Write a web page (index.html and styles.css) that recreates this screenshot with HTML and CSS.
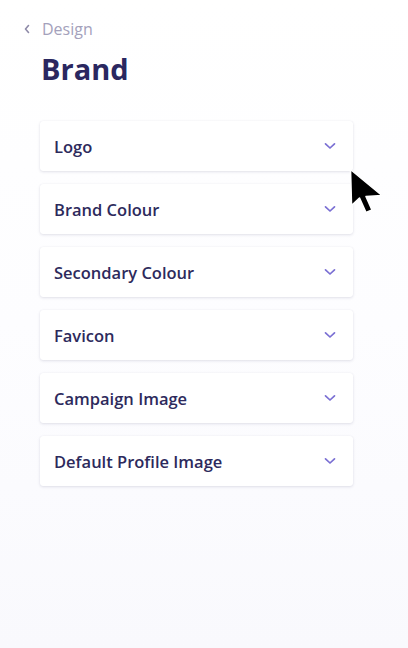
FILE: index.html
```html
<!DOCTYPE html>
<html>
<head>
<meta charset="utf-8">
<link rel="stylesheet" href="styles.css">
</head>
<body>
<div class="page">
  <a class="back">
    <svg class="back-icon" width="8" height="10" viewBox="0 0 8 10"><path d="M5.5 1.5 L2.5 5 L5.5 8.5" fill="none" stroke="#8e8aa8" stroke-width="1.6" stroke-linecap="round" stroke-linejoin="round"/></svg>
    <span>Design</span>
  </a>
  <h1 class="title">Brand</h1>
  <div class="list">
    <div class="card"><span>Logo</span><svg class="chev" width="12" height="8" viewBox="0 0 12 8"><path d="M1.5 1.8 L6 6 L10.5 1.8" fill="none" stroke="#7a6fd3" stroke-width="1.7" stroke-linecap="round" stroke-linejoin="round"/></svg></div>
    <div class="card"><span>Brand Colour</span><svg class="chev" width="12" height="8" viewBox="0 0 12 8"><path d="M1.5 1.8 L6 6 L10.5 1.8" fill="none" stroke="#7a6fd3" stroke-width="1.7" stroke-linecap="round" stroke-linejoin="round"/></svg></div>
    <div class="card"><span>Secondary Colour</span><svg class="chev" width="12" height="8" viewBox="0 0 12 8"><path d="M1.5 1.8 L6 6 L10.5 1.8" fill="none" stroke="#7a6fd3" stroke-width="1.7" stroke-linecap="round" stroke-linejoin="round"/></svg></div>
    <div class="card"><span>Favicon</span><svg class="chev" width="12" height="8" viewBox="0 0 12 8"><path d="M1.5 1.8 L6 6 L10.5 1.8" fill="none" stroke="#7a6fd3" stroke-width="1.7" stroke-linecap="round" stroke-linejoin="round"/></svg></div>
    <div class="card"><span>Campaign Image</span><svg class="chev" width="12" height="8" viewBox="0 0 12 8"><path d="M1.5 1.8 L6 6 L10.5 1.8" fill="none" stroke="#7a6fd3" stroke-width="1.7" stroke-linecap="round" stroke-linejoin="round"/></svg></div>
    <div class="card"><span>Default Profile Image</span><svg class="chev" width="12" height="8" viewBox="0 0 12 8"><path d="M1.5 1.8 L6 6 L10.5 1.8" fill="none" stroke="#7a6fd3" stroke-width="1.7" stroke-linecap="round" stroke-linejoin="round"/></svg></div>
  </div>
  <svg class="cursor" width="36" height="48" viewBox="0 0 36 48"><path d="M1.5 1.5 L2.5 37.5 L10.5 30 L17 44.5 L23 42 L17 28.5 L33 27.5 Z" fill="#000" stroke="#fff" stroke-width="1.6" stroke-linejoin="round"/></svg>
</div>
</body>
</html>
```
FILE: styles.css
```css
html, body {
  margin: 0;
  padding: 0;
}
body {
  background: linear-gradient(180deg, #ffffff 0%, #fdfdff 50%, #f9f9fd 100%);
  font-family: "Open Sans", Lato, sans-serif;
  width: 408px;
  height: 648px;
  overflow: hidden;
}
.page {
  position: relative;
  padding: 19px 55px 0 40px;
}
.back {
  display: flex;
  align-items: center;
  gap: 11px;
  margin-left: -17px;
  color: #a4a1bb;
  font-size: 16px;
  height: 20px;
}
.back-icon {
  display: block;
}
.title {
  margin: 12px 0 0 1px;
  font-size: 29px;
  font-weight: 700;
  color: #2a2760;
  line-height: 36px;
}
.list {
  display: flex;
  flex-direction: column;
  gap: 13px;
  margin-top: 34px;
  width: 313px;
}
.card {
  height: 50px;
  background: #fff;
  border-radius: 3px;
  box-shadow: 0 1px 3px rgba(40, 36, 90, 0.13), 0 0 1px rgba(40, 36, 90, 0.08);
  display: flex;
  align-items: center;
  justify-content: space-between;
  padding: 0 17px 0 14px;
  font-size: 16.5px;
  font-weight: 600;
  color: #2d2a5c;
}
.chev {
  display: block;
}
.cursor {
  position: absolute;
  left: 349px;
  top: 168px;
}
```
